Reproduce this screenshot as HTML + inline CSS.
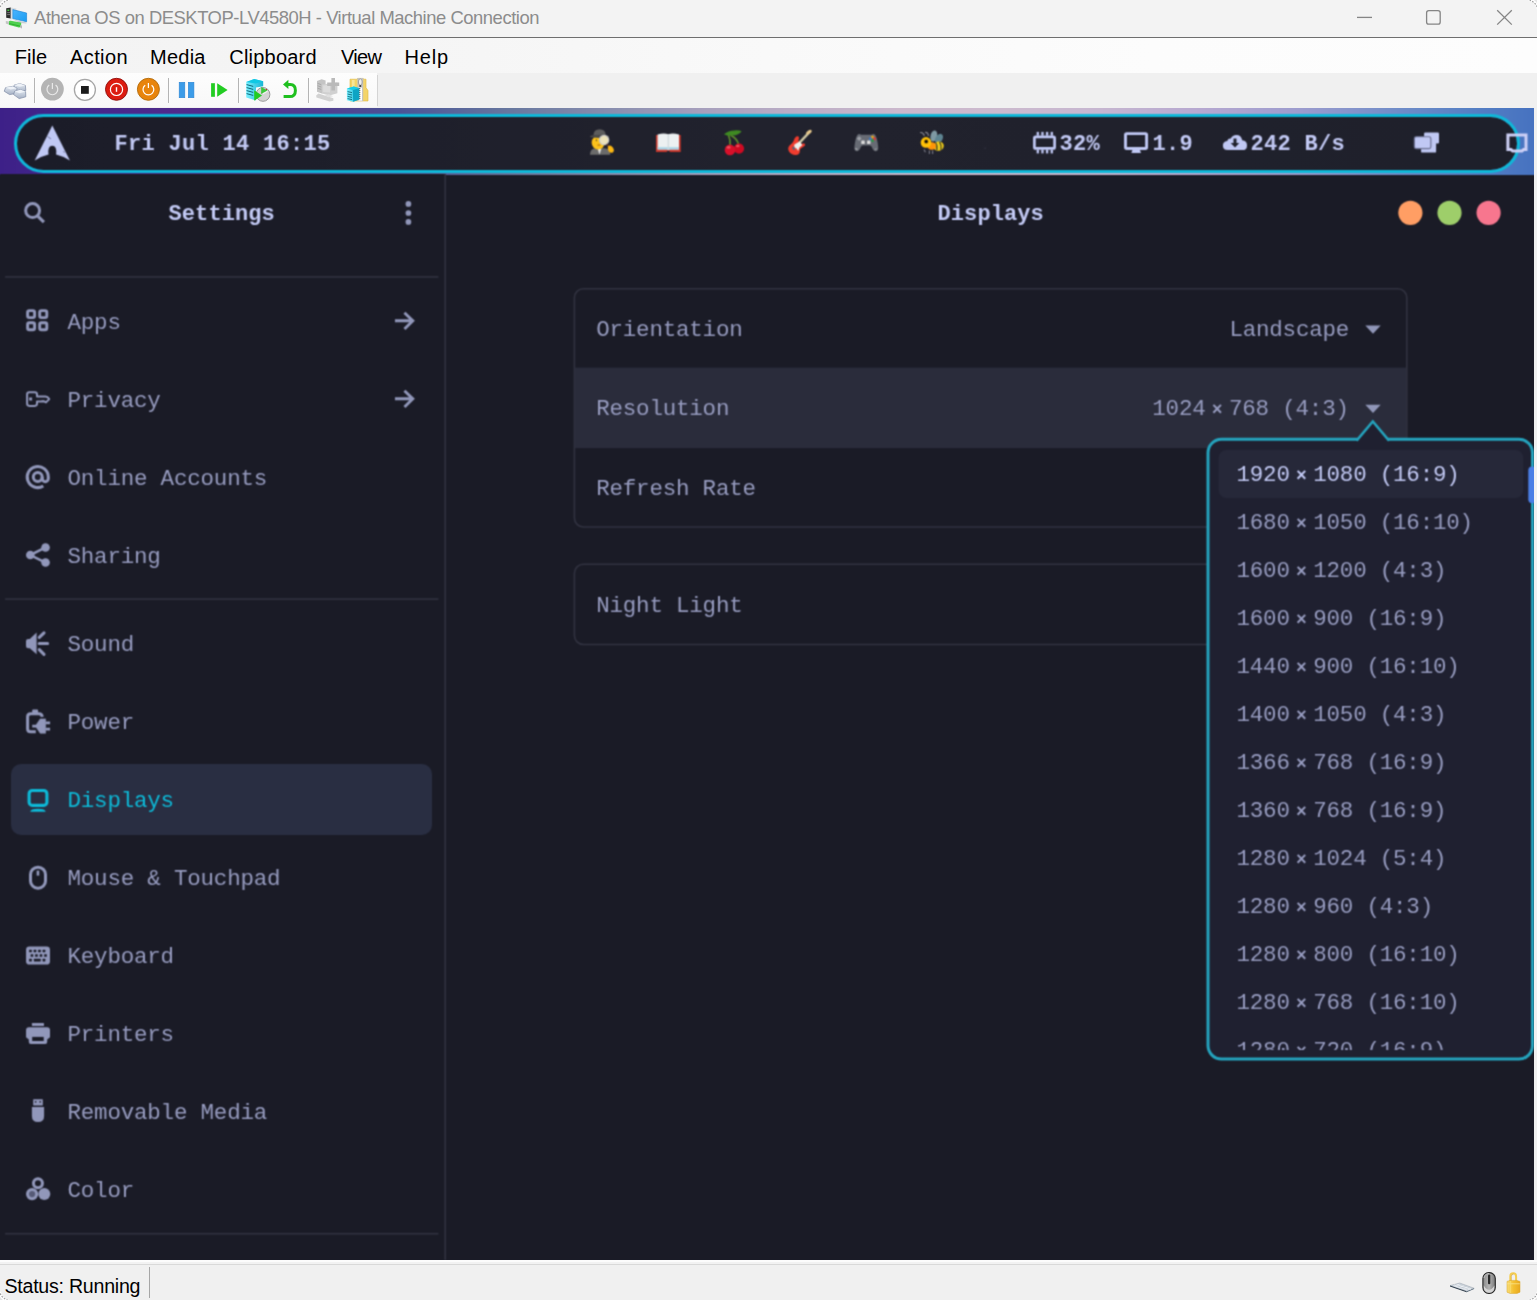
<!DOCTYPE html>
<html lang="en"><head><meta charset="utf-8"><title>Athena OS on DESKTOP-LV4580H - Virtual Machine Connection</title>
<style>
*{box-sizing:border-box;margin:0;padding:0}
html,body{width:1537px;height:1300px;overflow:hidden;background:#f0f0f0}
body{position:relative;font-family:"Liberation Sans",sans-serif}
.abs{position:absolute}
.mono{font-family:"Liberation Mono","DejaVu Sans Mono",monospace;font-size:22.5px;letter-spacing:-0.2px;white-space:pre;line-height:30px;color:#969bbf}
.b{font-weight:bold;font-size:22px;letter-spacing:0.1px}
.bb{letter-spacing:0.3px}
.x{display:inline-flex;justify-content:center;width:23.5px;letter-spacing:0;vertical-align:baseline}
.x i{font-style:normal;font-size:18px;font-weight:bold;position:relative;top:0.6px}
svg{position:absolute;overflow:visible}
#title{left:0;top:0;width:1537px;height:37px;background:#f3f3f3}
#tline{left:0;top:37px;width:1537px;height:1px;background:#6e6e6e}
#menu{left:0;top:38px;width:1537px;height:35px;background:linear-gradient(90deg,#f3f3f3 0%,#f5f5f5 25%,#f9f9f9 50%,#fcfcfc 75%,#fdfdfd 100%)}
#tool{left:0;top:73px;width:1537px;height:35px;background:#f0f0f0}
#toolw{left:0;top:73px;width:377px;height:34px;background:linear-gradient(#fdfdfd,#f8f8f8)}
.mi{position:absolute;top:45px;font-size:20px;line-height:24px;color:#000;white-space:pre}
#vm{left:0;top:108px;width:1534px;height:1152px;background:#1a1b26;overflow:hidden}
#vmi{left:-12px;top:-12px;width:1558px;height:1176px;background:#1a1b26;filter:url(#vmblur)}
#vmc{left:12px;top:12px;width:1534px;height:1152px}
#wall{left:-12px;top:-12px;width:1558px;height:79px;background:linear-gradient(90deg,#3d2088 12px,#43268a 72px,#532c8c 227px,#51408f 342px,#4a5496 412px,#68789f 524px,#8c90b0 632px,#a69fbc 712px,#bcaec6 812px,#cbb8cc 912px,#ccbace 1012px,#c6b6d0 1112px,#b6a8d0 1212px,#9c9cce 1312px,#6f8cc8 1412px,#5680c4 1482px,#4672c0 1546px)}
#bar{left:14px;top:6px;width:1506px;height:58.7px;border:3.3px solid #0fb8d8;border-radius:30px;background:linear-gradient(90deg,#1b1c28 0%,#1e1f2b 25%,#21222d 50%,#20212c 75%,#1e202b 100%);background-clip:padding-box}
#side{left:0;top:66px;width:445px;height:1086px;background:#1a1b26}
#sel{left:11px;top:655.7px;width:421.4px;height:71.6px;border-radius:10px;background:#292e42}
#status{left:0;top:1259.5px;width:1537px;height:41px;background:linear-gradient(#fcfcfc 0,#fcfcfc 1.6px,#f2f2f2 1.6px,#f2f2f2 4.3px,#d9d9d9 4.3px,#d9d9d9 5.4px,#f0f0f0 5.4px)}
</style></head>
<body>
<div id="title" class="abs"></div><div id="tline" class="abs"></div>
<div id="menu" class="abs"></div><div id="tool" class="abs"></div><div id="toolw" class="abs"></div>
<svg width="0" height="0" style="left:0;top:0"><defs>
<linearGradient id="gcube" x1="0" y1="0" x2="0" y2="1"><stop offset="0" stop-color="#e4eaf2"/><stop offset="1" stop-color="#a4b0c4"/></linearGradient>
<linearGradient id="gcyan" x1="0" y1="0" x2="1" y2="0"><stop offset="0" stop-color="#7af0ff"/><stop offset="1" stop-color="#18b4d4"/></linearGradient>
<linearGradient id="gblue" x1="0" y1="0" x2="1" y2="1"><stop offset="0" stop-color="#4ab4ff"/><stop offset="1" stop-color="#1a9cf0"/></linearGradient>
<linearGradient id="ggold" x1="0" y1="0" x2="1" y2="0"><stop offset="0" stop-color="#f8dc78"/><stop offset="0.5" stop-color="#f4c030"/><stop offset="1" stop-color="#e8a820"/></linearGradient>
<linearGradient id="gmouse" x1="0" y1="0" x2="1" y2="0"><stop offset="0" stop-color="#8a8a8a"/><stop offset="0.5" stop-color="#b4b4b4"/><stop offset="1" stop-color="#7a7a7a"/></linearGradient>
</defs></svg>
<svg style="left:0px;top:0px" width="32" height="37" viewBox="0 0 32 37" ><path d="M6.2 8.2L10.8 7.6V18.6L6.2 17.8Z" fill="#2c2c2c"/><path d="M10.8 7.6L16.4 8.4V11L12.4 10.4V19.2L10.8 18.6Z" fill="#d8dce0"/><rect x="7.4" y="9.6" width="1.8" height="1.3" fill="#3fe03f"/><path d="M7.2 12.6H10M7.2 14.6H10" stroke="#888" stroke-width="0.8"/>
<path d="M12.8 9.6L26.6 13V21.8L12.8 18.6Z" fill="url(#gblue)" stroke="#1a82d0" stroke-width="0.6"/><path d="M13 19.4L26.4 22.6V23.4L20 23Z" fill="#c8ccd0"/>
<path d="M8.8 21.4Q9.4 20.6 10.6 20.8L20.6 22.6Q21.6 23 21.2 24.4L20.6 26.4Q20 27.6 18.8 27.4L9.4 25Q8.4 24.6 8.6 23.4Z" fill="#4fd04f"/><path d="M9.2 23.6L20.4 26.2" stroke="#2fb02f" stroke-width="1"/><path d="M5.8 21L8.8 21.6L8.6 24.4L5.8 23.6Z" fill="#c4c4c4"/><path d="M20.4 25L22 25.4V28.4L20.2 27.8Z" fill="#b8b8b8"/></svg>
<div class="abs" style="left:34px;top:78px;width:1px;height:25px;background:#b4b4b4"></div><div class="abs" style="left:35px;top:78px;width:1px;height:25px;background:#fdfdfd"></div>
<div class="abs" style="left:168px;top:78px;width:1px;height:25px;background:#b4b4b4"></div><div class="abs" style="left:169px;top:78px;width:1px;height:25px;background:#fdfdfd"></div>
<div class="abs" style="left:238px;top:78px;width:1px;height:25px;background:#b4b4b4"></div><div class="abs" style="left:239px;top:78px;width:1px;height:25px;background:#fdfdfd"></div>
<div class="abs" style="left:308px;top:78px;width:1px;height:25px;background:#b4b4b4"></div><div class="abs" style="left:309px;top:78px;width:1px;height:25px;background:#fdfdfd"></div>
<div class="abs" style="left:377px;top:75px;width:1px;height:31px;background:#d4d4d4"></div>
<svg style="left:0px;top:73px" width="380" height="35" viewBox="0 0 380 35" ><g stroke="#7c8aa4" stroke-width="0.7" stroke-linejoin="round"><path d="M14 12.2L19.6 10.6L25.4 12.4L25.8 17.4L19.4 19.2L14.2 16.8Z" fill="url(#gcube)"/><path d="M4.2 18.2L5.6 14.6L12.6 13.4L17 15.2L16.4 20.4L9.6 21.6Z" fill="url(#gcube)"/><path d="M13.6 21.6L14.6 18.2L20.6 16.8L25.6 18.6L25.8 23.8L19.2 25.6Z" fill="url(#gcube)"/></g>
<path d="M14 12.2L19.6 10.6L25.4 12.4L19.8 13.8Z M5.6 14.6L12.6 13.4L17 15.2L10.6 16.6Z M14.6 18.2L20.6 16.8L25.6 18.6L19.6 20.2Z" fill="#eef2f8"/><circle cx="52.4" cy="16.1" r="11.4" fill="#b4b4b4"/><path d="M49.2 12A5.4 5.4 0 1 0 55.6 12" fill="none" stroke="#e8e8e8" stroke-width="1.2"/><path d="M52.4 10V16" stroke="#e8e8e8" stroke-width="1.2"/><circle cx="84.9" cy="16.8" r="10.5" fill="#fff" stroke="#a6a6a6" stroke-width="1.3"/><rect x="81" y="13" width="7.8" height="7.8" fill="#1c1c1c"/><circle cx="116.5" cy="16.3" r="11" fill="#dc1c10" stroke="#8c0c0a" stroke-width="0.9"/><circle cx="116.5" cy="16.4" r="6.1" fill="none" stroke="#fff" stroke-width="1.2"/><path d="M116.5 14.2V18.8" stroke="#fff" stroke-width="1.4"/><circle cx="148.4" cy="16.3" r="11" fill="#e8840c" stroke="#b06a0a" stroke-width="0.9"/><path d="M145.2 12.2A5.4 5.4 0 1 0 151.6 12.2" fill="none" stroke="#fff" stroke-width="1.2"/><path d="M148.4 10V15" stroke="#fff" stroke-width="1.2"/><rect x="179.2" y="9.3" width="5.6" height="15.4" fill="#3c9ce8" stroke="#2a84d4" stroke-width="0.6"/><rect x="188.3" y="9.3" width="5.6" height="15.4" fill="#3c9ce8" stroke="#2a84d4" stroke-width="0.6"/><rect x="211.1" y="10.2" width="3.8" height="13.6" fill="#22cc22"/><path d="M217.2 10.2L227.6 17L217.2 23.8Z" fill="#22cc22"/><circle cx="263" cy="21.4" r="6.9" fill="#d4d4d4" stroke="#9a9a9a" stroke-width="1"/><path d="M263 21.4L263 15.6L268 18.4Z" fill="#f4f4f4"/><path d="M261.6 19.6L267 16.2" stroke="#d03020" stroke-width="1"/><path d="M261.2 14L267.4 17.6L261.2 21Z" fill="#3cc83c"/>
<path d="M246.2 9L254.2 6L263.2 8.2V13.2L256 14.6V27.4L246.2 24.6Z" fill="url(#gcyan)"/><path d="M246.2 9L254.2 6L263.2 8.2L255.6 10.6Z" fill="#10c8e4"/><path d="M246.6 11.6L253.2 13.4M246.6 14.6L253.2 16.4M246.6 17.6L253.2 19.4M246.6 20.6L253.2 22.4" stroke="#106878" stroke-width="1"/>
<path d="M254.2 17.2L262 22.4L254.2 27.8Z" fill="#22cc22"/><path d="M286.6 11.4H290.4Q295.4 11.4 295.4 17.4Q295.4 23.6 289.6 23.6H283.6" fill="none" stroke="#1fc01f" stroke-width="3"/><path d="M283 11.4L288.4 6.8V16Z" fill="#1fc01f"/><path d="M317 8L321.6 6.2L325.6 7.4V18.6L321.8 20.4L317 18.8Z" fill="#c4c4c4"/><path d="M317.6 10.4L321.2 11.6M317.6 12.8L321.2 14M317.6 15.2L321.2 16.4" stroke="#a8a8a8" stroke-width="1"/><path d="M322 11.4L337.4 9.6V20.2L329.4 22.4L322 20.4Z" fill="#d0d0d0"/><path d="M323.2 12.6L330 11.8V19.6L323.2 19Z" fill="#dcdcdc"/>
<path d="M331.4 5H335V9.4H339.2V13H335V17.4H331.4V13H327.2V9.4H331.4Z" fill="#bababa"/><path d="M316.2 22.4L318.4 20.6L333.4 25.2V27.8L329.6 28.4L316.4 24.6Z" fill="#d2d2d2"/><path d="M324.4 22L329 21.2L333 23.2L328.4 24.2Z" fill="#e0e0e0"/><path d="M350 6.2H357.6V5.4H363.2V6.2H366V14.6L368 17.6V28H350Z" fill="#f4d468" stroke="#e0b840" stroke-width="0.6"/><path d="M352 7H354.6V18H352Z" fill="#fae698"/><rect x="357.4" y="5" width="5.8" height="23" fill="#c4c4c4"/><path d="M358.6 14.6H362V27.6H358.6Z" fill="#fff"/><path d="M358.6 15.6H362M358.6 17.6H362M358.6 19.6H362M358.6 21.6H362M358.6 23.6H362M358.6 25.6H362" stroke="#444" stroke-width="0.9" stroke-dasharray="1.7 1.7"/><ellipse cx="360.3" cy="9" rx="1.9" ry="3.2" fill="#eee" stroke="#8a8a8a" stroke-width="0.7"/><ellipse cx="360.3" cy="13" rx="1.1" ry="0.9" fill="#3a3a3a"/>
<path d="M346.9 15.6L353.8 13.6L359.2 15.2V26.6L353.2 28.8L346.9 27.2Z" fill="url(#gcyan)"/><path d="M346.9 15.6L353.8 13.6L359.2 15.2L352.6 17Z" fill="#18cce8"/><path d="M352.8 17L359.2 15.2V26.6L353.2 28.8Z" fill="#0ea4c4"/><path d="M347.6 18.6L352 19.6M347.6 21L352 22M347.6 23.4L352 24.4M347.6 25.6L352 26.6" stroke="#106878" stroke-width="0.9"/></svg>

<div class="abs" id="ttext" style="left:34.1px;top:6px;font-size:18.4px;line-height:24px;color:#8c8c8c;white-space:pre;letter-spacing:-0.45px">Athena OS on DESKTOP-LV4580H - Virtual Machine Connection</div>
<div class="mi" style="left:14.7px;letter-spacing:0.03px">File</div>
<div class="mi" style="left:70px;letter-spacing:0.4px">Action</div>
<div class="mi" style="left:150px;letter-spacing:0.25px">Media</div>
<div class="mi" style="left:229.3px;letter-spacing:0.21px">Clipboard</div>
<div class="mi" style="left:341px;letter-spacing:-0.67px">View</div>
<div class="mi" style="left:404.5px;letter-spacing:0.83px">Help</div>
<svg style="left:1340px;top:0" width="197" height="37" viewBox="0 0 197 37"><g fill="none" stroke="#858585" stroke-width="1.3">
<path d="M17 17.4H32"/><rect x="86.6" y="10.6" width="13.6" height="13.6" rx="2.2"/><path d="M157.2 10.2L171.8 24.6M171.8 10.2L157.2 24.6"/></g></svg>
<svg width="0" height="0" style="left:0;top:0"><defs><filter id="vmblur" x="0" y="0" width="100%" height="100%" color-interpolation-filters="sRGB"><feConvolveMatrix order="3" kernelMatrix="0.0529 0.1242 0.0529 0.1242 0.2916 0.1242 0.0529 0.1242 0.0529" edgeMode="duplicate" preserveAlpha="true"/></filter></defs></svg>
<div id="vm" class="abs"><div id="vmi" class="abs"><div id="vmc" class="abs">
<div id="wall" class="abs"></div>
<div id="bar" class="abs"></div>
<svg style="left:25px;top:12px" width="60" height="48" viewBox="0 0 60 48"><path d="M27.3 5.4L9.7 40.5Q17 35.8 23.5 34.4Q22.4 25.9 27.3 25.7Q32.2 25.9 31.1 34.4Q37.6 35.8 44.9 40.5Z" fill="#c0c8f4"/><path d="M22.6 16.6L26 18.9M38.2 31.5L40 32.4" stroke="#6a6f95" stroke-width="0.9" fill="none"/></svg>
<svg style="left:576px;top:12px" width="60" height="48" viewBox="0 0 60 48" role="img" aria-label="🕵"><path d="M13.9 34.8Q14.2 28.6 19.5 28.2H28.5Q34 28.6 34.4 34.8Z" fill="#6b6b6b"/><path d="M21.6 28.5L23.5 34.6L25.4 28.5Z" fill="#e8e8e8"/>
<path d="M15.6 18.6Q14.6 26.5 18.5 27.5L17.2 20Z" fill="#5a3420"/>
<ellipse cx="22.2" cy="22.6" rx="6.5" ry="6.9" fill="#fcc21b"/><ellipse cx="22.9" cy="25" rx="1.7" ry="0.6" fill="#a15a10"/><ellipse cx="20.4" cy="20.2" rx="0.6" ry="1" fill="#5a4a20"/>
<path d="M17.4 15.6Q17.6 9.2 23.6 9.2Q29.6 9.2 29.8 15.6Z" fill="#5c5c5c"/><ellipse cx="23.6" cy="16.4" rx="9.7" ry="1.7" fill="#4a4a4a"/>
<circle cx="28.1" cy="20" r="4.6" fill="#ece2b8" stroke="#c9c9c9" stroke-width="1.3"/><path d="M30.6 24.2L33 27" stroke="#5a3a2a" stroke-width="1.8"/>
<path d="M32 26.2Q34.5 24.6 36.8 27.4Q39 30.6 36.8 32.4Q34.4 33.6 32.6 31.2Q31.4 28.4 32 26.2Z" fill="#fdb813"/></svg>
<svg style="left:638px;top:12px" width="60" height="48" viewBox="0 0 60 48" role="img" aria-label="📖"><path d="M18 15H42.7V31.9H32.2L30.3 30.6L28.4 31.9H18Z" fill="#c8372c"/>
<path d="M19.6 14.6Q25.5 12.6 30.3 14.2Q35.2 12.6 41 14.6V29.4H32L30.3 30.2L28.6 29.4H19.6Z" fill="#ecf0f1"/>
<path d="M19.6 27.3H41V29.4H32L30.3 30.2L28.6 29.4H19.6Z" fill="#a5d3e6"/><path d="M30.3 14.2V30" stroke="#cfd8dc" stroke-width="1.2"/></svg>
<svg style="left:704px;top:12px" width="60" height="48" viewBox="0 0 60 48" role="img" aria-label="🍒"><path d="M24.6 15.5Q26.6 20 26.2 26M27.4 15.8Q32.8 18.4 34.6 24.4" stroke="#5e8a2c" stroke-width="1.7" fill="none" stroke-linecap="round"/>
<path d="M20 14.2Q24 10.6 30.5 10.4Q36 10.2 37.6 11.2Q35 15 28.4 15.6Q24.4 16 22.4 15.2Z" fill="#3f8a22"/>
<circle cx="35" cy="28.6" r="5.1" fill="#cf0a22"/><circle cx="26" cy="29.9" r="5.3" fill="#d8102a"/><ellipse cx="24.6" cy="27.4" rx="2" ry="1.3" fill="#f04a5a"/><ellipse cx="33.8" cy="26" rx="1.8" ry="1.2" fill="#f04a5a"/></svg>
<svg style="left:770px;top:12px" width="60" height="48" viewBox="0 0 60 48" role="img" aria-label="🎸"><path d="M29.6 22.6L38 13.6" stroke="#cfc6a2" stroke-width="2.4" stroke-linecap="round"/><ellipse cx="38.9" cy="12.2" rx="3.2" ry="1.7" transform="rotate(-32 38.9 12.2)" fill="#e6c88c"/>
<path d="M26.3 16.4Q29.6 15.6 29 18.4Q27.6 21 29.8 22.6Q31.6 24.6 33.6 23.2Q35.6 23.6 35 25.4Q33 27 31 28.2Q29.6 29.2 29.8 31.4Q29.6 34.8 25.8 35Q21.4 35.2 19 31.6Q17.2 28 19.6 25.6Q22.4 23.6 23.6 21Q24.4 17.4 26.3 16.4Z" fill="#f03c2e"/>
<path d="M24.4 24.4L29.6 21.6L32.4 25L29.4 27.4L28.2 31L26.6 28.6Q23.6 27.6 24.4 24.4Z" fill="#eef2ee"/><ellipse cx="23.6" cy="28.2" rx="1.2" ry="1.8" transform="rotate(-35 23.6 28.2)" fill="#5a6478"/></svg>
<svg style="left:836px;top:12px" width="60" height="48" viewBox="0 0 60 48" role="img" aria-label="🎮"><path d="M21.8 14.4Q23.4 13.4 25 14.8H35.6Q37.2 13.4 38.8 14.4Q41.2 17 42.2 27Q42.6 31 40 31.2Q37.6 31.4 36 27.4Q35.4 25.6 33.6 25.6H27Q25.2 25.6 24.6 27.4Q23 31.4 20.6 31.2Q18 31 18.4 27Q19.4 17 21.8 14.4Z" fill="#676b74"/>
<path d="M23.2 16.2L25.6 18.6L23.2 21L20.8 18.6Z" fill="#9ea1a8"/><rect x="25.3" y="20.6" width="3.4" height="3.4" rx="0.5" fill="#dcdcdc"/><rect x="31.1" y="20.6" width="3.4" height="3.4" rx="0.5" fill="#dcdcdc"/>
<circle cx="36.5" cy="17" r="1.5" fill="#e2a91a"/><circle cx="34.4" cy="18.8" r="1.5" fill="#3f78c4"/><circle cx="38.5" cy="18.8" r="1.5" fill="#d93a3a"/><circle cx="36.5" cy="20.6" r="1.5" fill="#2a9a48"/>
<ellipse cx="20.4" cy="29" rx="1.6" ry="1" transform="rotate(30 20.4 29)" fill="#9a9da4"/><ellipse cx="39.6" cy="29.2" rx="1.4" ry="0.9" transform="rotate(-30 39.6 29.2)" fill="#8a8d94"/></svg>
<svg style="left:902px;top:12px" width="60" height="48" viewBox="0 0 60 48" role="img" aria-label="🐝"><path d="M18.2 12.6Q21 12 22.4 15.8M23.2 12.4Q26.2 12.2 26.4 16" stroke="#8a8a92" stroke-width="1.1" fill="none"/>
<path d="M22 29.4L23.4 32.2M27.4 30.6V34M30.6 30.6V34" stroke="#7a7a86" stroke-width="1.1" fill="none"/>
<ellipse cx="31.8" cy="16" rx="3.3" ry="5.6" transform="rotate(14 31.8 16)" fill="#7f9aa4"/><ellipse cx="37" cy="18.6" rx="3.5" ry="5.2" transform="rotate(32 37 18.6)" fill="#5e8592"/>
<ellipse cx="36.6" cy="26.2" rx="5.2" ry="4.6" transform="rotate(-18 36.6 26.2)" fill="#f7d21a"/><path d="M33.8 22.6Q35.6 26 34.8 30.4M37.6 21.6Q39.6 25 39 29.8" stroke="#5a5620" stroke-width="1.6" fill="none"/>
<ellipse cx="29.8" cy="26" rx="4.2" ry="3.8" fill="#ff9408"/><circle cx="24" cy="22.4" r="5.3" fill="#ffc107"/><circle cx="24.2" cy="21.5" r="2.2" fill="#a87a00"/><circle cx="24.2" cy="21.5" r="1.5" fill="#080808"/></svg>
<svg style="left:960px;top:12px" width="60" height="48" viewBox="0 0 60 48"><rect x="24.6" y="27.6" width="1" height="1.2" fill="#3a3c4c"/></svg>
<svg style="left:1020px;top:12px" width="60" height="48" viewBox="0 0 60 48"><rect x="14.4" y="16.8" width="20.2" height="11.6" rx="1.2" fill="none" stroke="#c0c8f4" stroke-width="2.7"/><rect x="16.650000000000002" y="11.9" width="2.3" height="3.8" fill="#c0c8f4"/><rect x="16.650000000000002" y="29.6" width="2.3" height="3.8" fill="#c0c8f4"/><rect x="21.3" y="11.9" width="2.3" height="3.8" fill="#c0c8f4"/><rect x="21.3" y="29.6" width="2.3" height="3.8" fill="#c0c8f4"/><rect x="25.950000000000003" y="11.9" width="2.3" height="3.8" fill="#c0c8f4"/><rect x="25.950000000000003" y="29.6" width="2.3" height="3.8" fill="#c0c8f4"/><rect x="30.650000000000002" y="11.9" width="2.3" height="3.8" fill="#c0c8f4"/><rect x="30.650000000000002" y="29.6" width="2.3" height="3.8" fill="#c0c8f4"/></svg>
<svg style="left:1110px;top:12px" width="60" height="48" viewBox="0 0 60 48"><rect x="15.5" y="13.6" width="21.1" height="14.9" rx="1.2" fill="none" stroke="#c0c8f4" stroke-width="2.9"/><path d="M22.6 29.6H29.8L31 33H21.3Z" fill="#c0c8f4"/></svg>
<svg style="left:1210px;top:12px" width="60" height="48" viewBox="0 0 60 48"><path d="M17.6 30.1Q12.9 30.1 12.9 25.6Q12.9 21.6 17.2 21Q18.2 18.2 20.8 18.6Q22.4 15 26.4 15Q31.2 15 32.2 20.2Q37 20.4 37 25.4Q37 30.1 32.4 30.1Z" fill="#c0c8f4"/><path d="M23.5 18.4H26.5V23H29.3L25 27.4L20.7 23H23.5Z" fill="#1f202b"/></svg>
<svg style="left:1400px;top:12px" width="60" height="48" viewBox="0 0 60 48"><rect x="24.1" y="12.6" width="14.9" height="10.8" rx="1.2" fill="#c0c8f4"/><rect x="21.1" y="22.6" width="15" height="10" rx="1.2" fill="#c0c8f4"/><rect x="14.4" y="16.8" width="16.4" height="11.7" rx="1.8" fill="#c0c8f4" stroke="#6c7192" stroke-width="1.3"/><rect x="15.1" y="17.5" width="15" height="10.3" rx="1.2" fill="#c0c8f4"/></svg>
<svg style="left:1477px;top:0px" width="60" height="72" viewBox="0 0 60 72"><path d="M30.9 27V41.6H34L35.6 42.9H45L46.6 41.6H49V27Z" fill="none" stroke="#cdd0f6" stroke-width="3" stroke-linejoin="miter"/></svg>

<div class="abs mono b bb" style="left:114.5px;top:22.2px;color:#c2c9f4">Fri Jul 14 16:15</div>
<div class="abs mono b bb" style="left:1059.5px;top:22.2px;color:#c2c9f4">32%</div>
<div class="abs mono b bb" style="left:1152.5px;top:22.2px;color:#c2c9f4">1.9</div>
<div class="abs mono b bb" style="left:1250.5px;top:22.2px;color:#c2c9f4">242 B/s</div>
<div id="side" class="abs"></div>
<div class="abs mono b" style="left:168.5px;top:92.0px;color:#c2c9f4">Settings</div>
<div class="abs mono b" style="left:937.5px;top:92.0px;color:#c2c9f4">Displays</div>
<svg style="left:0;top:0" width="1534" height="1152" viewBox="0 0 1534 1152"><g fill="#313240"><rect x="5.1" y="168.1" width="433.3" height="1.6"/><rect x="5.1" y="490.3" width="433.3" height="1.6"/><rect x="5.1" y="1124.9" width="433.3" height="1.6"/><rect x="444.4" y="66" width="1.6" height="1086"/></g><g fill="none" stroke="#313240" stroke-width="1.6"><rect x="574.4" y="180.8" width="832.4" height="238.2" rx="9"/><rect x="574.4" y="456.3" width="832.4" height="80.2" rx="9"/></g><rect x="574.9" y="259.6" width="831.3" height="80.5" fill="#2a2c3b"/></svg>
<div id="sel" class="abs"></div>
<div class="abs mono" style="left:67.5px;top:199.8px;">Apps</div>
<div class="abs mono" style="left:67.5px;top:277.8px;">Privacy</div>
<div class="abs mono" style="left:67.5px;top:355.8px;">Online Accounts</div>
<div class="abs mono" style="left:67.5px;top:433.8px;">Sharing</div>
<div class="abs mono" style="left:67.5px;top:521.8px;">Sound</div>
<div class="abs mono" style="left:67.5px;top:599.8px;">Power</div>
<div class="abs mono" style="left:67.5px;top:677.8px;color:#0db9d7;">Displays</div>
<div class="abs mono" style="left:67.5px;top:755.8px;">Mouse &amp; Touchpad</div>
<div class="abs mono" style="left:67.5px;top:833.8px;">Keyboard</div>
<div class="abs mono" style="left:67.5px;top:911.8px;">Printers</div>
<div class="abs mono" style="left:67.5px;top:989.8px;">Removable Media</div>
<div class="abs mono" style="left:67.5px;top:1067.8px;">Color</div>
<svg style="left:10px;top:84px" width="50" height="40" viewBox="0 0 50 40"><circle cx="22.6" cy="18.55" r="6.95" fill="none" stroke="#9197ba" stroke-width="3"/><path d="M28 24.3L33.9 30.2" stroke="#9197ba" stroke-width="3.1" stroke-linecap="butt"/></svg>
<svg style="left:383px;top:84px" width="50" height="40" viewBox="0 0 50 40"><g fill="#9197ba"><circle cx="25.4" cy="11.9" r="2.85"/><circle cx="25.4" cy="21" r="2.85"/><circle cx="25.4" cy="29.95" r="2.85"/></g></svg>
<svg style="left:380px;top:192px" width="50" height="40" viewBox="0 0 50 40"><path d="M16.4 20.8H32M25.5 13.8L32.8 20.8L25.5 28" fill="none" stroke="#9197ba" stroke-width="2.9" stroke-linecap="square" stroke-linejoin="miter"/></svg>
<svg style="left:380px;top:270px" width="50" height="40" viewBox="0 0 50 40"><path d="M16.4 20.8H32M25.5 13.8L32.8 20.8L25.5 28" fill="none" stroke="#9197ba" stroke-width="2.9" stroke-linecap="square" stroke-linejoin="miter"/></svg>
<svg style="left:15px;top:192px" width="50" height="40" viewBox="0 0 50 40"><g fill="none" stroke="#9197ba" stroke-width="2.9"><rect x="12.6" y="10.6" width="7.0" height="7.0" rx="1.8"/><rect x="24.7" y="10.6" width="7.1" height="7.0" rx="1.8"/><rect x="12.6" y="22.7" width="7.0" height="7.1" rx="1.8"/><rect x="24.7" y="22.7" width="7.1" height="7.1" rx="1.8"/></g></svg>
<svg style="left:15px;top:272px" width="50" height="40" viewBox="0 0 50 40"><g fill="none" stroke="#9197ba" stroke-width="2"><path d="M22 16.4V14.6Q22 12.3 19.7 12.3H14.4Q12.1 12.3 12.1 14.6V23.6Q12.1 25.9 14.4 25.9H19.7Q22 25.9 22 23.6V21.6H29.5L31 22.4L34.2 19.1Q32.6 16.4 30.5 16.4Z" stroke-linejoin="round"/></g><rect x="14.1" y="17.5" width="3" height="3" fill="#9197ba"/><path d="M25.5 21.4Q27.5 19 30.5 21.2Z" fill="#9197ba"/></svg>
<svg style="left:15px;top:350px" width="50" height="40" viewBox="0 0 50 40"><g fill="none" stroke="#9197ba" stroke-width="3" stroke-linecap="butt"><circle cx="22.75" cy="19.05" r="4.45"/><path d="M28.3 28.0A10.55 10.55 0 1 1 33.3 19.05V20.6A3.05 3.05 0 0 1 27.2 20.6V19"/></g></svg>
<svg style="left:15px;top:428px" width="50" height="40" viewBox="0 0 50 40"><g fill="#9197ba"><circle cx="15.3" cy="19.05" r="4.3"/><circle cx="30.55" cy="11.45" r="4.3"/><circle cx="30.55" cy="26.55" r="4.3"/></g><path d="M30.55 11.45L15.3 19.05L30.55 26.55" fill="none" stroke="#9197ba" stroke-width="2.6"/></svg>
<svg style="left:15px;top:516px" width="50" height="40" viewBox="0 0 50 40"><path d="M21.6 8.6V30.3L14.8 24.2H13.2Q11 24.2 11 22V17Q11 14.9 13.2 14.9H14.8Z" fill="#9197ba"/><path d="M24.3 13.4L29 8.8M24.2 19.55H32.6M24.3 25.6L29 30.4" fill="none" stroke="#9197ba" stroke-width="3.1" stroke-linecap="round"/></svg>
<svg style="left:15px;top:594px" width="50" height="40" viewBox="0 0 50 40"><path d="M27.2 14.8Q27 11.7 24 11.7H15.6Q12.6 11.7 12.6 14.7V26.7Q12.6 29.7 15.6 29.7H20.8" fill="none" stroke="#9197ba" stroke-width="3"/><rect x="17.2" y="7.4" width="5.9" height="4" rx="1" fill="#9197ba"/><path d="M25.2 16.9H30.6V31.2H25.2L21.4 25.6V22.6Z" fill="#9197ba" stroke="#9197ba" stroke-width="0.6" stroke-linejoin="round"/><path d="M17.2 24.1H23M30.5 20.9H35.1M30.5 27.1H35.1" stroke="#9197ba" stroke-width="2.6" fill="none"/></svg>
<svg style="left:15px;top:672px" width="50" height="40" viewBox="0 0 50 40"><rect x="14.1" y="10.5" width="17.8" height="14.9" rx="3.2" fill="none" stroke="#0db9d7" stroke-width="3.1"/><path d="M15.3 31.8Q15.3 28.7 22.95 28.7Q30.6 28.7 30.6 31.8Z" fill="#0db9d7"/></svg>
<svg style="left:15px;top:750px" width="50" height="40" viewBox="0 0 50 40"><rect x="15.5" y="9.2" width="15" height="21" rx="7.3" fill="none" stroke="#9197ba" stroke-width="3"/><path d="M22.95 12.6V17.6" stroke="#9197ba" stroke-width="2.6" fill="none"/></svg>
<svg style="left:15px;top:828px" width="50" height="40" viewBox="0 0 50 40"><rect x="11.05" y="10.4" width="23.9" height="18.2" rx="3.4" fill="#9197ba"/><rect x="14.1" y="13.65" width="2.7" height="2.7" rx="0.5" fill="#1a1b26"/><rect x="18.599999999999998" y="13.65" width="2.7" height="2.7" rx="0.5" fill="#1a1b26"/><rect x="23.099999999999998" y="13.65" width="2.7" height="2.7" rx="0.5" fill="#1a1b26"/><rect x="27.599999999999998" y="13.65" width="2.7" height="2.7" rx="0.5" fill="#1a1b26"/><rect x="15.6" y="18.15" width="2.7" height="2.7" rx="0.5" fill="#1a1b26"/><rect x="20.099999999999998" y="18.15" width="2.7" height="2.7" rx="0.5" fill="#1a1b26"/><rect x="24.599999999999998" y="18.15" width="2.7" height="2.7" rx="0.5" fill="#1a1b26"/><rect x="29.15" y="18.15" width="2.7" height="2.7" rx="0.5" fill="#1a1b26"/><rect x="14.1" y="22.7" width="2.7" height="2.7" rx="0.5" fill="#1a1b26"/><rect x="27.599999999999998" y="22.7" width="2.7" height="2.7" rx="0.5" fill="#1a1b26"/><rect x="18.9" y="22.7" width="6.8" height="2.7" rx="0.5" fill="#1a1b26"/></svg>
<svg style="left:15px;top:906px" width="50" height="40" viewBox="0 0 50 40"><rect x="16.9" y="9" width="12.1" height="3.1" rx="0.6" fill="#9197ba"/><path d="M14 13.3H32Q35 13.3 35 16.3V23.3L32.2 25.4V28Q32.2 30 30.2 30H15.8Q13.8 30 13.8 28V25.4L11.05 23.3V16.3Q11.05 13.3 14 13.3Z" fill="#9197ba"/><rect x="17.2" y="22.9" width="11.5" height="4.1" fill="#1a1b26"/></svg>
<svg style="left:15px;top:984px" width="50" height="40" viewBox="0 0 50 40"><rect x="18.2" y="7.3" width="9.6" height="6.3" rx="0.5" fill="#9197ba"/><circle cx="20.65" cy="9.8" r="0.85" fill="#1a1b26"/><circle cx="25.2" cy="9.8" r="0.85" fill="#1a1b26"/><path d="M16.9 15H29.1V24Q29.1 30.1 23 30.1Q16.9 30.1 16.9 24Z" fill="#9197ba"/></svg>
<svg style="left:15px;top:1062px" width="50" height="40" viewBox="0 0 50 40"><circle cx="29.3" cy="24.1" r="6" fill="#9197ba"/><circle cx="17.1" cy="24.1" r="4.6" fill="#565a76" stroke="#9197ba" stroke-width="3"/><circle cx="22.95" cy="13.35" r="4.5" fill="none" stroke="#9197ba" stroke-width="3"/></svg>

<svg style="left:1385px;top:82px" width="130" height="46" viewBox="0 0 130 46"><circle cx="25.4" cy="22.85" r="12.1" fill="#ff9e64"/><circle cx="64.5" cy="22.85" r="12.1" fill="#9ece6a"/><circle cx="103.6" cy="22.85" r="12.1" fill="#f7768e"/></svg>
<div class="abs mono" style="left:596.2px;top:206.8px">Orientation</div>
<div class="abs mono" style="left:596.2px;top:286.3px">Resolution</div>
<div class="abs mono" style="left:596.2px;top:365.8px">Refresh Rate</div>
<div class="abs mono" style="left:596.2px;top:483.3px">Night Light</div>
<div class="abs mono" style="left:1229.4px;top:206.8px">Landscape</div>
<div class="abs mono" style="left:1152.3px;top:286.3px">1024<span class="x">&#8201;<i>×</i>&#8201;</span>768 (4:3)</div>
<svg style="left:1360px;top:210px" width="26" height="110" viewBox="0 0 26 110"><path d="M5.3 7.4h15.4l-7.7 8.3z M5.3 86.8h15.4l-7.7 8.3z" fill="#9096b8"/></svg>
<svg style="left:0;top:0" width="1534" height="1152" viewBox="0 0 1534 1152"><path d="M1221.5 331.3H1358.4L1372.8 313.6L1387.2 331.3H1519A13.5 13.5 0 0 1 1532.5 344.8V937.6A13.5 13.5 0 0 1 1519 951.1H1221.5A13.5 13.5 0 0 1 1208 937.6V344.8A13.5 13.5 0 0 1 1221.5 331.3Z" fill="#1f2030"/><path d="M1388 331.3H1519A13.5 13.5 0 0 1 1532.5 344.8V937.6A13.5 13.5 0 0 1 1519 951.1H1221.5A13.5 13.5 0 0 1 1208 937.6V344.8A13.5 13.5 0 0 1 1221.5 331.3H1357.6" fill="none" stroke="#24a2bc" stroke-width="3"/><path d="M1356.6 332.6L1372.8 313.4L1389 332.6" fill="none" stroke="#24a2bc" stroke-width="2.5" stroke-linejoin="miter"/><rect x="1218.6" y="341.9" width="304.7" height="48.1" rx="8" fill="#262839"/><rect x="1528.3" y="358.6" width="8" height="36.6" rx="4" fill="#4a7fe6"/></svg>
<div class="abs" style="left:1210px;top:333px;width:321px;height:609px;overflow:hidden">
<div class="abs mono" style="left:26.5px;top:19.3px;color:#c2c9f4;">1920<span class="x">&#8201;<i>×</i>&#8201;</span>1080 (16:9)</div>
<div class="abs mono" style="left:26.5px;top:67.3px;">1680<span class="x">&#8201;<i>×</i>&#8201;</span>1050 (16:10)</div>
<div class="abs mono" style="left:26.5px;top:115.3px;">1600<span class="x">&#8201;<i>×</i>&#8201;</span>1200 (4:3)</div>
<div class="abs mono" style="left:26.5px;top:163.3px;">1600<span class="x">&#8201;<i>×</i>&#8201;</span>900 (16:9)</div>
<div class="abs mono" style="left:26.5px;top:211.3px;">1440<span class="x">&#8201;<i>×</i>&#8201;</span>900 (16:10)</div>
<div class="abs mono" style="left:26.5px;top:259.3px;">1400<span class="x">&#8201;<i>×</i>&#8201;</span>1050 (4:3)</div>
<div class="abs mono" style="left:26.5px;top:307.3px;">1366<span class="x">&#8201;<i>×</i>&#8201;</span>768 (16:9)</div>
<div class="abs mono" style="left:26.5px;top:355.3px;">1360<span class="x">&#8201;<i>×</i>&#8201;</span>768 (16:9)</div>
<div class="abs mono" style="left:26.5px;top:403.3px;">1280<span class="x">&#8201;<i>×</i>&#8201;</span>1024 (5:4)</div>
<div class="abs mono" style="left:26.5px;top:451.3px;">1280<span class="x">&#8201;<i>×</i>&#8201;</span>960 (4:3)</div>
<div class="abs mono" style="left:26.5px;top:499.3px;">1280<span class="x">&#8201;<i>×</i>&#8201;</span>800 (16:10)</div>
<div class="abs mono" style="left:26.5px;top:547.3px;">1280<span class="x">&#8201;<i>×</i>&#8201;</span>768 (16:10)</div>
<div class="abs mono" style="left:26.5px;top:595.3px;">1280<span class="x">&#8201;<i>×</i>&#8201;</span>720 (16:9)</div>
</div>
</div></div></div>
<div id="status" class="abs"></div>
<div class="abs" style="left:4.5px;top:1274px;font-size:19.6px;line-height:24px;color:#000;white-space:pre;letter-spacing:-0.25px">Status: Running</div>
<div class="abs" style="left:149px;top:1267px;width:1px;height:31px;background:#a6a6a6"></div>
<svg style="left:1440px;top:1264px" width="97" height="36" viewBox="0 0 97 36" ><path d="M10 21.6L19.8 19L34.1 24.2L26.6 27.2Z" fill="#c8d0d8" stroke="#8a96a2" stroke-width="0.4"/><path d="M10 21.6L26.6 27.2V28.2L10 22.6Z" fill="#2c3a48"/><path d="M26.6 27.2L34.1 24.2V25.1L26.6 28.2Z" fill="#5a6a7a"/><path d="M13.4 21.6L27.6 26.2M16.6 20.6L30.8 25.2M14.4 20.6L17.4 22.6M19.6 20.2L16.6 21.2M23.6 21.8L20.4 22.8M27.6 23.2L24.4 24.4M31.2 24.6L28 25.8" stroke="#f0f4f8" stroke-width="0.7"/>
<rect x="42.9" y="8.6" width="12.4" height="20.8" rx="5.8" fill="url(#gmouse)" stroke="#262626" stroke-width="1.1"/><path d="M43.8 21.4Q49.1 30 54.4 21.4Q54.8 28.6 49.1 28.8Q43.4 28.6 43.8 21.4Z" fill="#d4d4d4"/><path d="M44 14Q44.6 9.6 49.1 9.4" stroke="#c8c8c8" stroke-width="0.8" fill="none"/><rect x="48" y="10.4" width="2.3" height="9.8" rx="1" fill="#2a2a2a"/>
<path d="M70.3 17V12.4Q70.3 9.2 73.2 9.2Q76.1 9.2 76.1 12.4V17" fill="none" stroke="#f4cc50" stroke-width="2"/><path d="M71.3 17V12.4Q71.6 10 73.6 10" fill="none" stroke="#c8962a" stroke-width="0.5"/><path d="M67 17.4L70 16.4H77L80 17.4V28.2L77 29.4H70L67 28.2Z" fill="url(#ggold)" stroke="#d8a428" stroke-width="0.5"/><path d="M67.2 19.8H79.8" stroke="#fae48c" stroke-width="0.8"/><path d="M70.4 17V29" stroke="#f8dc70" stroke-width="0.8"/></svg>

<svg style="left:0;top:0" width="10.4" height="10.4" viewBox="0 0 8 8"><path d="M0 0H3.2Q1 1 0 3.2Z" fill="#e4e4e4"/><path d="M-0.2 6.6A7.4 7.4 0 0 1 6.6 -0.2" fill="none" stroke="#fff" stroke-width="1.9"/><path d="M0.2 5.4A6 6 0 0 1 2 2.6L2.8 2A6 6 0 0 1 6 0.2" fill="none" stroke="#9c9c9c" stroke-width="0.9" stroke-dasharray="1.3 1"/></svg><svg style="left:1526.6px;top:0" width="10.4" height="10.4" viewBox="0 0 8 8"><g transform="translate(8 0) scale(-1 1)"><path d="M0 0H3.2Q1 1 0 3.2Z" fill="#e4e4e4"/><path d="M-0.2 6.6A7.4 7.4 0 0 1 6.6 -0.2" fill="none" stroke="#fff" stroke-width="1.9"/><path d="M0.2 5.4A6 6 0 0 1 2 2.6L2.8 2A6 6 0 0 1 6 0.2" fill="none" stroke="#9c9c9c" stroke-width="0.9" stroke-dasharray="1.3 1"/></g></svg><svg style="left:0;top:1289.6px" width="10.4" height="10.4" viewBox="0 0 8 8"><g transform="translate(0 8) scale(1 -1)"><path d="M0 0H3.2Q1 1 0 3.2Z" fill="#e4e4e4"/><path d="M-0.2 6.6A7.4 7.4 0 0 1 6.6 -0.2" fill="none" stroke="#fff" stroke-width="1.9"/><path d="M0.2 5.4A6 6 0 0 1 2 2.6L2.8 2A6 6 0 0 1 6 0.2" fill="none" stroke="#9c9c9c" stroke-width="0.9" stroke-dasharray="1.3 1"/></g></svg><svg style="left:1526.6px;top:1289.6px" width="10.4" height="10.4" viewBox="0 0 8 8"><g transform="translate(8 8) scale(-1 -1)"><path d="M0 0H3.2Q1 1 0 3.2Z" fill="#e4e4e4"/><path d="M-0.2 6.6A7.4 7.4 0 0 1 6.6 -0.2" fill="none" stroke="#fff" stroke-width="1.9"/><path d="M0.2 5.4A6 6 0 0 1 2 2.6L2.8 2A6 6 0 0 1 6 0.2" fill="none" stroke="#9c9c9c" stroke-width="0.9" stroke-dasharray="1.3 1"/></g></svg>
</body></html>
